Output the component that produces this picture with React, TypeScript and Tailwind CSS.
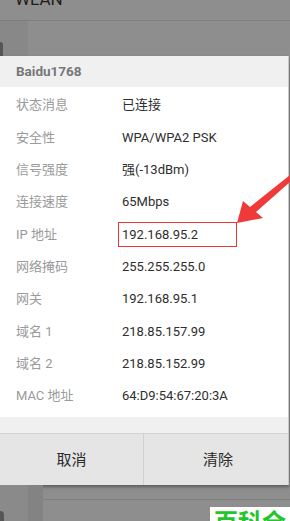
const rows: { label: string; value: string; boxed?: boolean }[] = [
  { label: '状态消息', value: '已连接' },
  { label: '安全性', value: 'WPA/WPA2 PSK' },
  { label: '信号强度', value: '强(-13dBm)' },
  { label: '连接速度', value: '65Mbps' },
  { label: 'IP 地址', value: '192.168.95.2', boxed: true },
  { label: '网络掩码', value: '255.255.255.0' },
  { label: '网关', value: '192.168.95.1' },
  { label: '域名 1', value: '218.85.157.99' },
  { label: '域名 2', value: '218.85.152.99' },
  { label: 'MAC 地址', value: '64:D9:54:67:20:3A' },
];

const font = { fontFamily: 'Roboto, "Noto Sans CJK SC", sans-serif' };

function Arrow() {
  return (
    <svg
      className="pointer-events-none absolute left-0 top-0"
      width="290"
      height="521"
      viewBox="0 0 290 521"
    >
      <polygon
        points="237,223 243,201 250,207 290,175 291,181 256,212 263,218"
        fill="#ef3a3a"
      />
    </svg>
  );
}

export default function App() {
  return (
    <div
      className="relative flex h-[521px] w-[290px] flex-col overflow-hidden bg-[#8e8e8e]"
      style={font}
    >
      {/* settings page behind */}
      <div className="h-[21px] border-b border-[#7f7f7f]">
        <span className="-mt-[9px] ml-[15px] block text-[17px] leading-[17px] text-[#1e1e1e]">
          WLAN
        </span>
      </div>
      <div className="flex h-[35px]">
        <div className="flex w-[28px] items-end bg-[#888888]">
          <div className="h-[14px] w-[3px] rounded-tr-sm bg-[#555]" />
        </div>
        <div className="flex-1" />
      </div>

      {/* dialog */}
      <div className="flex w-[289px] flex-col border-r border-[#c8c8c8] shadow-[0_2px_3px_rgba(0,0,0,0.35)]">
        <div className="flex h-[31px] items-center bg-[#f0f0f0] pl-[16px] text-[13.5px] font-bold text-[#777]">
          Baidu1768
        </div>
        <div className="flex flex-col bg-white pt-[2px] pb-[5px]">
          {rows.map((row) => (
            <div key={row.label} className="flex h-[32.33px] items-center text-[13px]">
              <span className="w-[122px] shrink-0 pl-[16px] text-[#9a9a9a]">{row.label}</span>
              {row.boxed ? (
                <span className="-ml-[4px] flex h-[25px] w-[119px] items-center border border-[#e53935] pl-[3px] text-[#2e2e2e]">
                  {row.value}
                </span>
              ) : (
                <span className="text-[#2e2e2e]">{row.value}</span>
              )}
            </div>
          ))}
        </div>
        <div className="h-[16px] bg-[#f0f0f0]" />
        <div className="flex h-[52px] border-t border-[#d2d2d2] bg-[#e5e5e5] text-[15px] text-[#2a2a2a]">
          <button type="button" className="flex w-[144px] items-center justify-center border-r border-[#d0d0d0]">
            取消
          </button>
          <button type="button" className="flex flex-1 items-center justify-center pl-[4px]">
            清除
          </button>
        </div>
      </div>

      {/* page behind, bottom */}
      <div className="flex flex-1">
        <div className="flex w-[28px] items-end bg-[#8a8a8a]">
          <div className="h-[10px] w-[4px] rounded-tr-full bg-[#555]" />
        </div>
        <div className="w-[15px] bg-[#838383]" />
        <div className="flex flex-1 flex-col">
          <div className="h-[15px] border-b border-[#7d7d7d]" />
        </div>
      </div>

      <Arrow />

      <div className="absolute left-[210px] top-[507px] h-[20px] w-[80px] overflow-hidden bg-white pl-[4px]">
        <span className="block text-[24px] leading-[28px] font-bold text-[#22c52a]" style={{ fontFamily: '"Noto Sans CJK SC", sans-serif' }}>
          百科全书
        </span>
      </div>
    </div>
  );
}
